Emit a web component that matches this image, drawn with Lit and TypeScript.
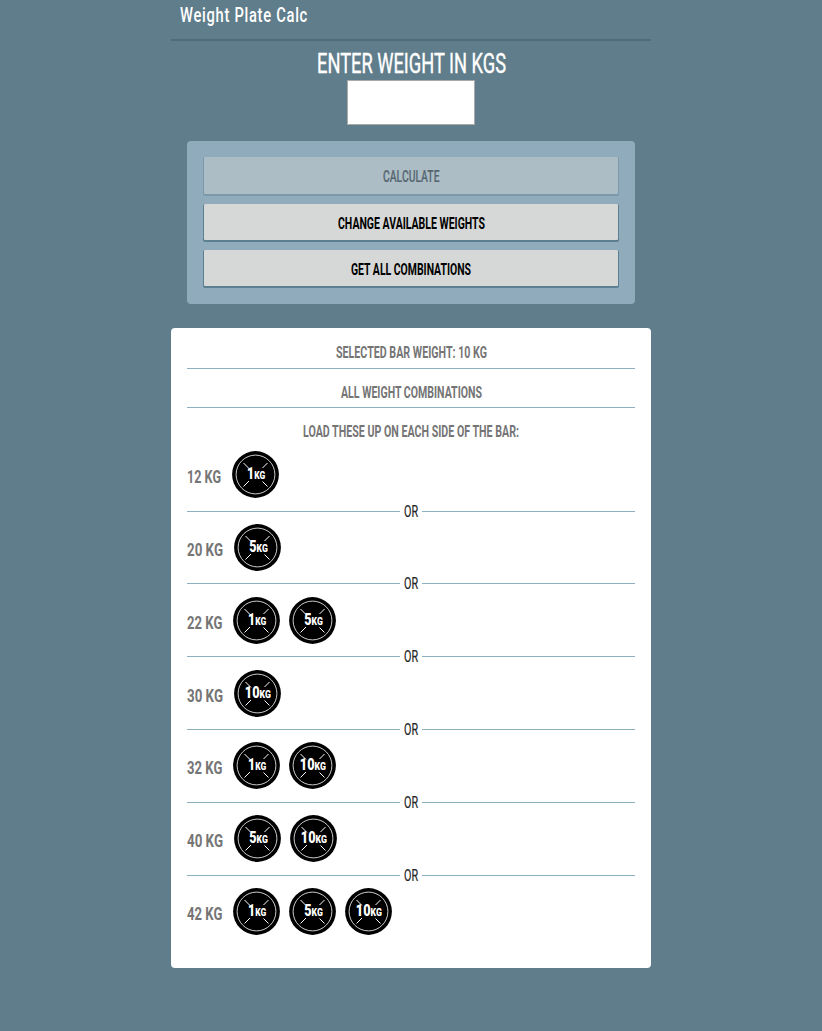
import { LitElement, html, svg, css } from "lit";
import { customElement, property } from "lit/decorators.js";

// One line of condensed lettering, fitted to a given width.
@customElement("narrow-text")
class NarrowText extends LitElement {
  @property() text = "";
  @property({ type: Number }) width = 100;
  @property({ type: Number }) cap = 12;
  @property({ type: Number }) weight = 400;
  @property({ type: Number }) stroke = 0;
  @property({ type: Number }) spacing = 0;

  static styles = css`
    :host { display: block; flex: none; }
    .line { display: block; overflow: visible; fill: currentColor; stroke: currentColor; font-family: Roboto, "Liberation Sans", sans-serif; }
  `;

  render() {
    return html`<svg class="line" width=${this.width} height=${this.cap}>
      <text x="0" y=${this.cap} font-size=${this.cap / 0.711} font-weight=${this.weight}
        stroke-width=${this.stroke} letter-spacing=${this.spacing}
        textLength=${this.width} lengthAdjust="spacingAndGlyphs">${this.text}</text>
    </svg>`;
  }
}

const PLATES: Record<number, { x: number; w: number }> = {
  1: { x: 15, w: 18.2 },
  5: { x: 15.2, w: 18.6 },
  10: { x: 10.8, w: 26.2 },
};

@customElement("weight-plate")
class WeightPlate extends LitElement {
  @property({ type: Number }) kg = 1;

  static styles = css`
    :host { display: block; flex: none; width: 47px; height: 47px; }
    .disc { display: block; font-family: Roboto, "Liberation Sans", sans-serif; font-weight: 900; fill: #fff; }
    .mark { stroke: #fff; stroke-width: 1; fill: none; }
    .ring { stroke: #fff; stroke-width: 0.8; fill: none; }
    .body { fill: #000; }
  `;

  render() {
    const p = PLATES[this.kg];
    return html`<svg class="disc" width="47" height="47" viewBox="0 0 47 47">
      ${svg`<circle class="body" cx="23.5" cy="23.5" r="23.4"/>
      <circle class="ring" cx="23.5" cy="23.5" r="19.4"/>
      <path class="mark" d="M11.5 12 L17 17.5 M35.5 12 L30.5 17 M11.5 35.5 L17 30 M35.5 35.5 L30.5 30.5"/>
      <text x=${p.x} y="28.3" font-size="16.6" textLength=${p.w} lengthAdjust="spacingAndGlyphs">${this.kg}<tspan font-size="11.4">KG</tspan></text>`}
    </svg>`;
  }
}

const ROWS = [
  { total: 12, width: 34, gap: 11.4, plates: [1] },
  { total: 20, width: 36, gap: 11.4, plates: [5] },
  { total: 22, width: 35.3, gap: 11.2, plates: [1, 5] },
  { total: 30, width: 36, gap: 11.4, plates: [10] },
  { total: 32, width: 35.3, gap: 11.2, plates: [1, 10] },
  { total: 40, width: 36, gap: 11.4, plates: [5, 10] },
  { total: 42, width: 35.3, gap: 11.2, plates: [1, 5, 10] },
];

@customElement("app-root")
class AppRoot extends LitElement {
  static styles = css`
    :host { display: block; min-height: 1031px; background: #607d8b; color: #fff; }
    .page { width: 480px; margin: 0 auto; }
    .header { box-sizing: border-box; height: 41px; padding: 6.5px 8.5px 0; border-bottom: 2px solid #506c78; }
    .entry { display: flex; flex-direction: column; align-items: center; padding-top: 13px; }
    .field { box-sizing: border-box; width: 128px; height: 45px; margin: 7px 0 16px; padding: 0; border: 1px solid #aaa; border-radius: 0; background: #fff; }
    .controls { box-sizing: border-box; height: 163px; margin: 0 16px 24px; padding: 16px 17px; border-radius: 4px; background: #90abbb; display: grid; grid-template-rows: 37px 36px 36px; row-gap: 10px; }
    .button { display: flex; align-items: center; justify-content: center; width: 100%; padding: 1px 0 0; border: 0; border-radius: 1px; background: #d6d8d7; color: #000; box-shadow: 0 1px 0 1px #5c7f91; }
    .button:disabled { opacity: 0.4; color: #000; }
    .results { box-sizing: border-box; height: 640px; padding: 0 16px; border-radius: 4px; background: #fff; color: #757575; }
    .heading { box-sizing: border-box; display: flex; justify-content: center; border-bottom: 1px solid #8bb0be; }
    .bar { height: 41px; padding-top: 18px; }
    .all { height: 39px; padding-top: 17px; }
    .load { height: 39.3px; padding-top: 17px; border: 0; }
    .row { display: flex; align-items: center; height: 55px; }
    .label { padding-top: 4px; }
    .plates { display: flex; gap: 9px; }
    .or { display: flex; align-items: center; gap: 4px; height: 17.8px; color: #222; }
    .rule { flex: 1; height: 1px; background: #8bb0be; }
  `;

  t(text: string, width: number, cap: number, weight: number, stroke = 0, spacing = 0) {
    return html`<narrow-text .text=${text} .width=${width} .cap=${cap} .weight=${weight} .stroke=${stroke} .spacing=${spacing}></narrow-text>`;
  }

  render() {
    return html`<div class="page">
      <div class="header">${this.t("Weight Plate Calc", 128, 14.8, 500, 0, 1)}</div>
      <div class="entry">
        ${this.t("ENTER WEIGHT IN KGS", 189, 19, 400, 0.4)}
        <input class="field" aria-label="Weight">
      </div>
      <div class="controls">
        <button class="button" disabled>${this.t("CALCULATE", 56.5, 11.5, 500, 0.2)}</button>
        <button class="button">${this.t("CHANGE AVAILABLE WEIGHTS", 147, 11.5, 700)}</button>
        <button class="button">${this.t("GET ALL COMBINATIONS", 120, 11.5, 700)}</button>
      </div>
      <div class="results">
        <div class="heading bar">${this.t("SELECTED BAR WEIGHT: 10 KG", 151, 11.5, 700)}</div>
        <div class="heading all">${this.t("ALL WEIGHT COMBINATIONS", 141, 11.5, 700)}</div>
        <div class="heading load">${this.t("LOAD THESE UP ON EACH SIDE OF THE BAR:", 216, 11.5, 700)}</div>
        ${ROWS.map((r, i) => html`
          ${i ? html`<div class="or"><span class="rule"></span>${this.t("OR", 14, 11.3, 400, 0.2)}<span class="rule"></span></div>` : ""}
          <div class="row" style="gap:${r.gap}px">
            <div class="label">${this.t(r.total + " KG", r.width, 13, 700)}</div>
            <div class="plates">${r.plates.map((k) => html`<weight-plate .kg=${k}></weight-plate>`)}</div>
          </div>`)}
      </div>
    </div>`;
  }
}
